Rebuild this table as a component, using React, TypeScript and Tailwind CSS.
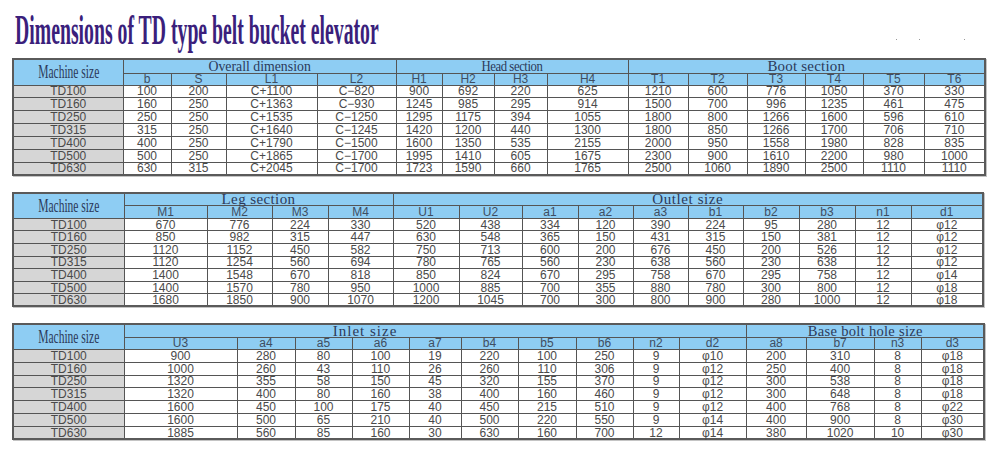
const sizes = ["TD100", "TD160", "TD250", "TD315", "TD400", "TD500", "TD630"];

type Group = { title: string; span: number; titleClass: string; cellClass?: string };

type TableSpec = {
  cols: number[];
  groups: Group[];
  heads: string[];
  rows: string[][];
  headH: string;
  subH: string;
  rowH: string;
};

const overall: TableSpec = {
  cols: [110, 48, 55, 91, 79, 46, 52, 53, 81, 60, 59, 58, 58, 61, 61],
  groups: [
    { title: "Overall dimension", span: 4, titleClass: "scale-x-[0.92]" },
    { title: "Head section", span: 4, titleClass: "scale-x-[0.85] tracking-[-0.5px]" },
    { title: "Boot section", span: 6, titleClass: "tracking-[0.2px]" },
  ],
  heads: ["b", "S", "L1", "L2", "H1", "H2", "H3", "H4", "T1", "T2", "T3", "T4", "T5", "T6"],
  rows: [
    ["100", "200", "C+1100", "C\u2212820", "900", "692", "220", "625", "1210", "600", "776", "1050", "370", "330"],
    ["160", "250", "C+1363", "C\u2212930", "1245", "985", "295", "914", "1500", "700", "996", "1235", "461", "475"],
    ["250", "250", "C+1535", "C\u22121250", "1295", "1175", "394", "1055", "1800", "800", "1266", "1600", "596", "610"],
    ["315", "250", "C+1640", "C\u22121245", "1420", "1200", "440", "1300", "1800", "850", "1266", "1700", "706", "710"],
    ["400", "250", "C+1790", "C\u22121500", "1600", "1350", "535", "2155", "2000", "950", "1558", "1980", "828", "835"],
    ["500", "250", "C+1865", "C\u22121700", "1995", "1410", "605", "1675", "2300", "900", "1610", "2200", "980", "1000"],
    ["630", "315", "C+2045", "C\u22121700", "1723", "1590", "660", "1765", "2500", "1060", "1890", "2500", "1110", "1110"],
  ],
  headH: "h-[14px]",
  subH: "h-[12px]",
  rowH: "h-[12.85px]",
};

const leg: TableSpec = {
  cols: [111, 83, 65, 56, 65, 66, 63, 56, 55, 55, 55, 56, 56, 56, 72],
  groups: [
    { title: "Leg section", span: 4, titleClass: "tracking-[0.4px]" },
    { title: "Outlet size", span: 10, titleClass: "tracking-[0.6px]" },
  ],
  heads: ["M1", "M2", "M3", "M4", "U1", "U2", "a1", "a2", "a3", "b1", "b2", "b3", "n1", "d1"],
  rows: [
    ["670", "776", "224", "330", "520", "438", "334", "120", "390", "224", "95", "280", "12", "\u03c612"],
    ["850", "982", "315", "447", "630", "548", "365", "150", "431", "315", "150", "381", "12", "\u03c612"],
    ["1120", "1152", "450", "582", "750", "713", "600", "200", "676", "450", "200", "526", "12", "\u03c612"],
    ["1120", "1254", "560", "694", "780", "765", "560", "230", "638", "560", "230", "638", "12", "\u03c612"],
    ["1400", "1548", "670", "818", "850", "824", "670", "295", "758", "670", "295", "758", "12", "\u03c614"],
    ["1400", "1570", "780", "950", "1000", "885", "700", "355", "880", "780", "300", "800", "12", "\u03c618"],
    ["1680", "1850", "900", "1070", "1200", "1045", "700", "300", "800", "900", "280", "1000", "12", "\u03c618"],
  ],
  headH: "h-[12px]",
  subH: "h-[13px]",
  rowH: "h-[12.57px]",
};

const inlet: TableSpec = {
  cols: [111, 113, 58, 57, 57, 52, 57, 58, 57, 46, 67, 60, 68, 47, 63],
  groups: [
    { title: "Inlet size", span: 10, titleClass: "tracking-[1px]", cellClass: "pr-[140px]" },
    { title: "Base bolt hole size", span: 4, titleClass: "scale-x-[0.97] tracking-[0.3px]" },
  ],
  heads: ["U3", "a4", "a5", "a6", "a7", "b4", "b5", "b6", "n2", "d2", "a8", "b7", "n3", "d3"],
  rows: [
    ["900", "280", "80", "100", "19", "220", "100", "250", "9", "\u03c610", "200", "310", "8", "\u03c618"],
    ["1000", "260", "43", "110", "26", "260", "110", "306", "9", "\u03c612", "250", "400", "8", "\u03c618"],
    ["1320", "355", "58", "150", "45", "320", "155", "370", "9", "\u03c612", "300", "538", "8", "\u03c618"],
    ["1320", "400", "80", "160", "38", "400", "160", "460", "9", "\u03c612", "300", "648", "8", "\u03c618"],
    ["1600", "450", "100", "175", "40", "450", "215", "510", "9", "\u03c612", "400", "768", "8", "\u03c622"],
    ["1600", "500", "65", "210", "40", "500", "220", "550", "9", "\u03c614", "400", "900", "8", "\u03c630"],
    ["1885", "560", "85", "160", "30", "630", "160", "700", "12", "\u03c614", "380", "1020", "10", "\u03c630"],
  ],
  headH: "h-[13px]",
  subH: "h-[12px]",
  rowH: "h-[12.86px]",
};

const serif = "font-['Liberation_Serif',serif]";
const sans = "font-['Liberation_Sans',Arial,sans-serif]";

function DimTable({ spec }: { spec: TableSpec }) {
  const total = spec.cols.reduce((a, b) => a + b, 0);
  return (
    <table
      className={`table-fixed border-collapse border-2 border-[#5a5a5a] ${sans} text-[12px] leading-[10px] text-[#4a4a4a] shadow-[1px_1px_0_#c4c4c4]`}
      style={{ width: total }}
    >
      <colgroup>
        {spec.cols.map((w, i) => (
          <col key={i} style={{ width: w }} />
        ))}
      </colgroup>
      <thead>
        <tr className={spec.headH}>
          <th
            rowSpan={2}
            className={`border border-[#555] bg-[#8ecdf3] p-0 font-normal ${serif} text-[18px] leading-[14px] text-[#2c3a5a]`}
          >
            <span className="inline-block scale-x-[0.64] whitespace-nowrap">Machine size</span>
          </th>
          {spec.groups.map((g) => (
            <th
              key={g.title}
              colSpan={g.span}
              className={`border border-[#555] bg-[#8ecdf3] p-0 align-middle font-normal ${serif} text-[15px] leading-[11px] text-[#2c3a5a] ${g.cellClass ?? ""}`}
            >
              <span className={`inline-block whitespace-nowrap ${g.titleClass}`}>{g.title}</span>
            </th>
          ))}
        </tr>
        <tr className={spec.subH}>
          {spec.heads.map((h) => (
            <th key={h} className="border border-[#555] bg-[#8ecdf3] p-0 font-normal text-[12px] leading-[10px] text-[#3e4e62]">
              {h}
            </th>
          ))}
        </tr>
      </thead>
      <tbody>
        {spec.rows.map((r, i) => (
          <tr key={sizes[i]} className={spec.rowH}>
            <td className="border border-[#555] bg-[#d6d6d6] p-0 text-center">{sizes[i]}</td>
            {r.map((v, j) => (
              <td key={j} className="border border-[#555] bg-white p-0 text-center">
                {v}
              </td>
            ))}
          </tr>
        ))}
      </tbody>
    </table>
  );
}

export default function App() {
  return (
    <div className="relative h-[449px] w-[1000px] overflow-hidden bg-white">
      <div className="flex h-[58px] items-start pl-[15px] pt-[8px]">
        <h1
          className={`${serif} origin-left scale-x-[0.47] whitespace-nowrap text-[42px] font-bold leading-[44px] text-[#3b1f7c]`}
        >
          Dimensions of TD type belt bucket elevator
        </h1>
      </div>
      <div className="absolute left-[896px] top-[39px] flex gap-[22px]">
        <span className="h-[1px] w-[1px] bg-[#999]" />
        <span className="h-[1px] w-[1px] bg-[#999]" />
        <span className="ml-[22px] h-[1px] w-[1px] bg-[#999]" />
      </div>
      <div className="pl-[12px]">
        <DimTable spec={overall} />
        <div className="h-[16px]" />
        <DimTable spec={leg} />
        <div className="h-[16px]" />
        <DimTable spec={inlet} />
      </div>
    </div>
  );
}
